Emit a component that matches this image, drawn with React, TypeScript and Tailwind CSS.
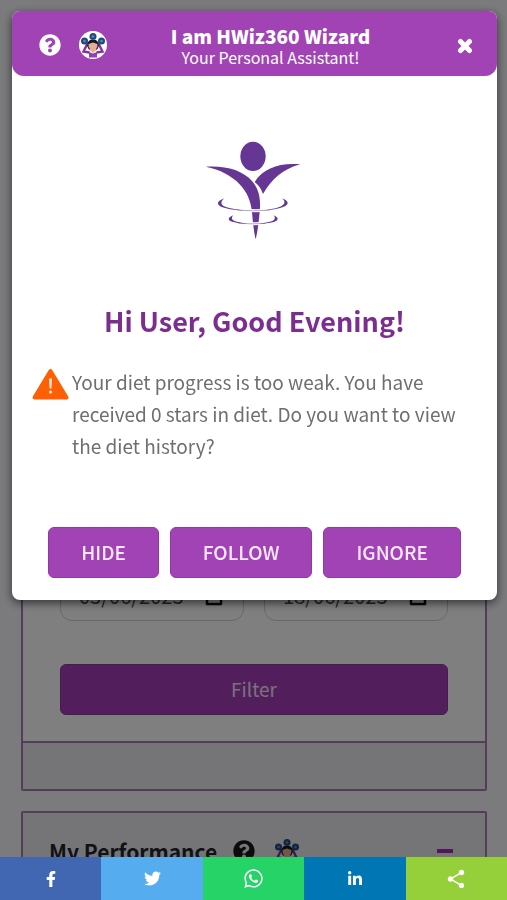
import type { ReactNode } from "react";
import {
  FaFacebookF,
  FaLinkedinIn,
  FaQuestionCircle,
  FaTwitter,
  FaWhatsapp,
} from "react-icons/fa";
import { MdShare } from "react-icons/md";

const shareLinks = [
  { label: "Facebook", color: "bg-[#4267b2]", icon: <FaFacebookF size={16} /> },
  { label: "Twitter", color: "bg-[#55acee]", icon: <FaTwitter size={17} /> },
  { label: "WhatsApp", color: "bg-[#25d366]", icon: <FaWhatsapp size={21} /> },
  { label: "LinkedIn", color: "bg-[#0077b5]", icon: <FaLinkedinIn size={16} /> },
  { label: "Share", color: "bg-[#95d03a]", icon: <MdShare size={22} /> },
];

const balls = [
  { cx: 14, cy: 5.5 },
  { cx: 5.5, cy: 10 },
  { cx: 22.5, cy: 10 },
];

function WizardIcon({ className }: { className?: string }) {
  return (
    <svg viewBox="0 0 28 28" className={className} aria-hidden="true">
      <path d="M8 12 11 9h6l3 3-1 3H9z" fill="#17171f" />
      <path d="M9.500 13 14 11.500l4.500 1.500-.5 5.500-4 3.500-4-3.500z" fill="#e3b095" />
      <path d="M8 13.500 4.500 20.500 10.500 21.500" fill="none" stroke="#8a2fa0" strokeWidth="2.400" />
      <path d="M20 13.500 23.500 20.500 17.500 21.500" fill="none" stroke="#8a2fa0" strokeWidth="2.400" />
      <path d="M7.500 12.500l3 6M20.500 12.500l-3 6" stroke="#34203f" strokeWidth="1.300" />
      <path d="M10 21l4 1.500 4-1.500v5.500h-8z" fill="#9440aa" />
      {balls.map(({ cx, cy }) => (
        <g key={cx}>
          <circle cx={cx} cy={cy} r="3.500" fill="#1f4a80" />
          <circle cx={cx} cy={cy} r="1.300" fill="#5d8abd" />
        </g>
      ))}
    </svg>
  );
}

function Logo() {
  return (
    <svg viewBox="0 0 390 360" className="w-[130px]" role="img" aria-label="HWiz360">
      <g fill="#663694">
        <ellipse cx="189" cy="79" rx="38" ry="44" />
        <path d="M47 110c60-4 110 10 139 43 22 26 27 55 23 92-3 34-6 58-12 83-5-22-8-45-11-83-5-62-51-117-139-135z" />
        <path d="M331 103c-58-6-112 10-137 53 12 10 20 21 25 36 25-42 58-75 112-89z" />
      </g>
      <path d="M150 240q45 4 90 0M150 279q45 4 82 0" fill="none" stroke="#fff" strokeWidth="9" />
      <path d="M140 240q50 5 100 0M145 280q45 3 82 0" fill="none" stroke="#b9a6cb" strokeWidth="3" />
      <g fill="#663694">
        <path d="M104 205c-28 9-27 23 4 30 16 4 34 6 54 7-20-3-38-6-52-10-17-5-22-16-6-27z" />
        <path d="M276 205c25 9 22 23-6 29-16 4-34 7-54 8 20-3 38-6 52-11 16-5 21-16 8-26z" />
        <path d="M130 256c-20 8-18 17 4 21 12 3 24 4 38 5-14-3-26-5-36-8-10-4-14-9-6-18z" />
        <path d="M251 256c18 8 15 17-4 21-12 3-24 4-38 5 14-3 26-5 36-8 9-4 13-9 6-18z" />
      </g>
    </svg>
  );
}

function CalendarIcon() {
  return (
    <svg viewBox="0 0 18 20" className="h-5 w-[18px]" aria-hidden="true">
      <path d="M2 4h14v14H2z" fill="none" stroke="#111" strokeWidth="2.500" strokeLinejoin="round" />
      <path d="M2 6h14M5 1v3M13 1v3" stroke="#111" strokeWidth="2.500" />
    </svg>
  );
}

function DateField({ label, value }: { label: string; value: string }) {
  return (
    <div className="flex h-[51px] min-w-0 flex-1 items-center rounded-xl border border-[#d0d0d8] pr-5 pl-[18px]">
      <input
        type="text"
        aria-label={label}
        defaultValue={value}
        className="w-full min-w-0 bg-transparent text-xl text-[#4a4a4a] outline-none"
      />
      <button type="button" aria-label={`Pick ${label.toLowerCase()}`}>
        <CalendarIcon />
      </button>
    </div>
  );
}

function ActionButton({ children }: { children: ReactNode }) {
  return (
    <button
      type="button"
      className="h-[51px] rounded-md border border-[#9336a6] bg-[#a243b5] px-8 text-[19px] font-medium text-[#fbeaff]"
    >
      {children}
    </button>
  );
}

function Dashboard() {
  return (
    <main className="flex flex-col gap-5 pt-3 pr-5 pl-[21px]">
      <section className="rounded-xs border-2 border-[#a87ab2] bg-[#eaebf1]">
        <div className="border-b-2 border-[#a87ab2] bg-white px-[37px] pt-[556px] pb-[26px]">
          <div className="flex gap-5">
            <DateField label="From date" value="03/06/2023" />
            <DateField label="To date" value="18/06/2023" />
          </div>
          <button
            type="button"
            className="mt-[43px] h-[51px] w-full rounded-md border border-[#9336a6] bg-[#a43eb8] text-[19px] text-[#f6e3fa]"
          >
            Filter
          </button>
        </div>
        <div className="h-[46px]" />
      </section>
      <section className="rounded-xs border-2 border-[#a87ab2] bg-[#eaebf1]">
        <div className="flex h-[75px] items-center pr-8 pl-[26px]">
          <h2 className="text-[21px] leading-8 font-bold text-[#22242c]">My Performance</h2>
          <FaQuestionCircle size={22} className="ml-4 text-[#16161a]" />
          <WizardIcon className="ml-[18px] size-7" />
          <button type="button" aria-label="Collapse" className="ml-auto h-1 w-4 bg-[#9a35ae]" />
        </div>
        <div className="h-40 bg-white" />
      </section>
    </main>
  );
}

function WizardDialog() {
  return (
    <div
      role="dialog"
      aria-modal="true"
      aria-labelledby="wizard-title"
      className="w-full rounded-lg bg-white shadow-[0_3px_10px_rgba(0,0,0,0.6)]"
    >
      <header className="flex h-[65px] items-center rounded-t-lg rounded-b-xl bg-[#a243b5] px-6 text-white">
        <div className="flex w-20 items-center gap-[18px] pt-0.5 pl-[3px]">
          <button type="button" aria-label="Help">
            <FaQuestionCircle size={22} />
          </button>
          <button type="button" aria-label="Wizard" className="shrink-0 rounded-full bg-white">
            <WizardIcon className="size-7" />
          </button>
        </div>
        <div className="flex-1 pt-1 text-center">
          <h1 id="wizard-title" className="text-[19px] leading-[22px] font-black">
            I am HWiz360 Wizard
          </h1>
          <p className="text-base leading-5">Your Personal Assistant!</p>
        </div>
        <button type="button" aria-label="Close" className="flex w-12 justify-end pt-1">
          <svg viewBox="0 0 16 16" className="size-4" aria-hidden="true">
            <path
              d="M3.500 3.500l9 9M12.500 3.500l-9 9"
              stroke="currentColor"
              strokeWidth="5"
              strokeLinecap="round"
            />
          </svg>
        </button>
      </header>
      <div className="flex flex-col px-5 pb-[22px]">
        <div className="flex justify-center pt-[54px]">
          <Logo />
        </div>
        <h2 className="mt-[53px] text-center text-[27px] leading-9 font-bold text-[#7b2d90]">
          Hi User, Good Evening!
        </h2>
        <div className="mt-[27px] flex items-start gap-[3px]">
          <svg viewBox="0 0 37 32" className="mt-0.5 h-8 w-[37px] shrink-0" aria-hidden="true">
            <path
              d="M18.500 3 34.500 29.500H2.500z"
              fill="#ff5f05"
              stroke="#ff5f05"
              strokeWidth="4"
              strokeLinejoin="round"
            />
            <path d="M17 10.500h3l-.6 10h-1.800z" fill="#ffe9d6" />
            <circle cx="18.500" cy="24" r="1.600" fill="#ffe9d6" />
          </svg>
          <p className="text-[19px] leading-8 text-[#6f6f6f]">
            Your diet progress is too weak. You have received 0 stars in diet. Do you want to view
            the diet history?
          </p>
        </div>
        <div className="mt-[65px] flex justify-center gap-[11px]">
          <ActionButton>HIDE</ActionButton>
          <ActionButton>FOLLOW</ActionButton>
          <ActionButton>IGNORE</ActionButton>
        </div>
      </div>
    </div>
  );
}

export default function App() {
  return (
    <div className="h-screen overflow-hidden bg-[#f7f7fb] font-['Noto_Sans_CJK_SC','Noto_Sans',sans-serif]">
      <Dashboard />
      <div className="fixed inset-0 flex items-start bg-black/50 pt-[11px] pr-2.5 pl-3">
        <WizardDialog />
      </div>
      <nav aria-label="Share" className="fixed inset-x-0 bottom-0 grid h-[43px] grid-cols-5">
        {shareLinks.map((link) => (
          <a
            key={link.label}
            href="#"
            aria-label={link.label}
            className={`flex items-center justify-center text-white ${link.color}`}
          >
            {link.icon}
          </a>
        ))}
      </nav>
    </div>
  );
}
